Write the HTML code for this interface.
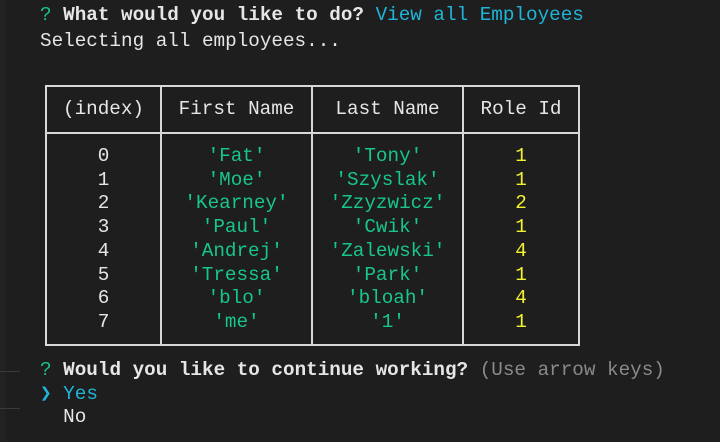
<!DOCTYPE html><html><head><style>
body{margin:0;width:720px;height:442px;background:#1e1e1e;overflow:hidden;position:relative;font-family:"Liberation Mono","DejaVu Sans Mono",monospace;font-size:19.3px;color:#e6e6e6}
.l{position:absolute;left:40px;height:24px;line-height:24px;white-space:pre}
.b{font-weight:bold}.g{color:#17c68b}.c{color:#1fb4d8}.y{color:#f2f230}.m{color:#8a8a8a}
.col{position:absolute;text-align:center;white-space:pre;line-height:23.7px}
.h{position:absolute;background:#d8d8d8;height:2px}.v{position:absolute;background:#d8d8d8;width:2px}
</style></head><body>
<div style="position:absolute;left:0;top:0;width:6px;height:442px;background:#222"></div>
<div style="position:absolute;left:0;top:371px;width:20px;height:1px;background:#3a3a3a"></div>
<div style="position:absolute;left:0;top:408px;width:20px;height:1px;background:#3a3a3a"></div>
<div class="l" style="top:3px"><span class="g">?</span> <span class="b">What would you like to do?</span> <span class="c">View all Employees</span></div>
<div class="l" style="top:29px">Selecting all employees...</div>
<div class="h" style="left:45px;top:85px;width:535px"></div>
<div class="h" style="left:45px;top:132px;width:535px"></div>
<div class="h" style="left:45px;top:344px;width:535px"></div>
<div class="v" style="left:45px;top:85px;height:261px"></div>
<div class="v" style="left:160px;top:85px;height:261px"></div>
<div class="v" style="left:311px;top:85px;height:261px"></div>
<div class="v" style="left:462px;top:85px;height:261px"></div>
<div class="v" style="left:578px;top:85px;height:261px"></div>
<div class="col" style="left:47px;width:113px;top:98px">(index)</div>
<div class="col" style="left:162px;width:149px;top:98px">First Name</div>
<div class="col" style="left:313px;width:149px;top:98px">Last Name</div>
<div class="col" style="left:464px;width:114px;top:98px">Role Id</div>
<div class="col" style="left:47px;width:113px;top:145px">0
1
2
3
4
5
6
7</div>
<div class="col g" style="left:162px;width:149px;top:145px">'Fat'
'Moe'
'Kearney'
'Paul'
'Andrej'
'Tressa'
'blo'
'me'</div>
<div class="col g" style="left:313px;width:149px;top:145px">'Tony'
'Szyslak'
'Zzyzwicz'
'Cwik'
'Zalewski'
'Park'
'bloah'
'1'</div>
<div class="col y" style="left:464px;width:114px;top:145px">1
1
2
1
4
1
4
1</div>
<div class="l" style="top:358px"><span class="g">?</span> <span class="b">Would you like to continue working?</span> <span class="m">(Use arrow keys)</span></div>
<div class="l c" style="top:382px">❯ Yes</div>
<div class="l" style="top:405px">  No</div>
</body></html>
